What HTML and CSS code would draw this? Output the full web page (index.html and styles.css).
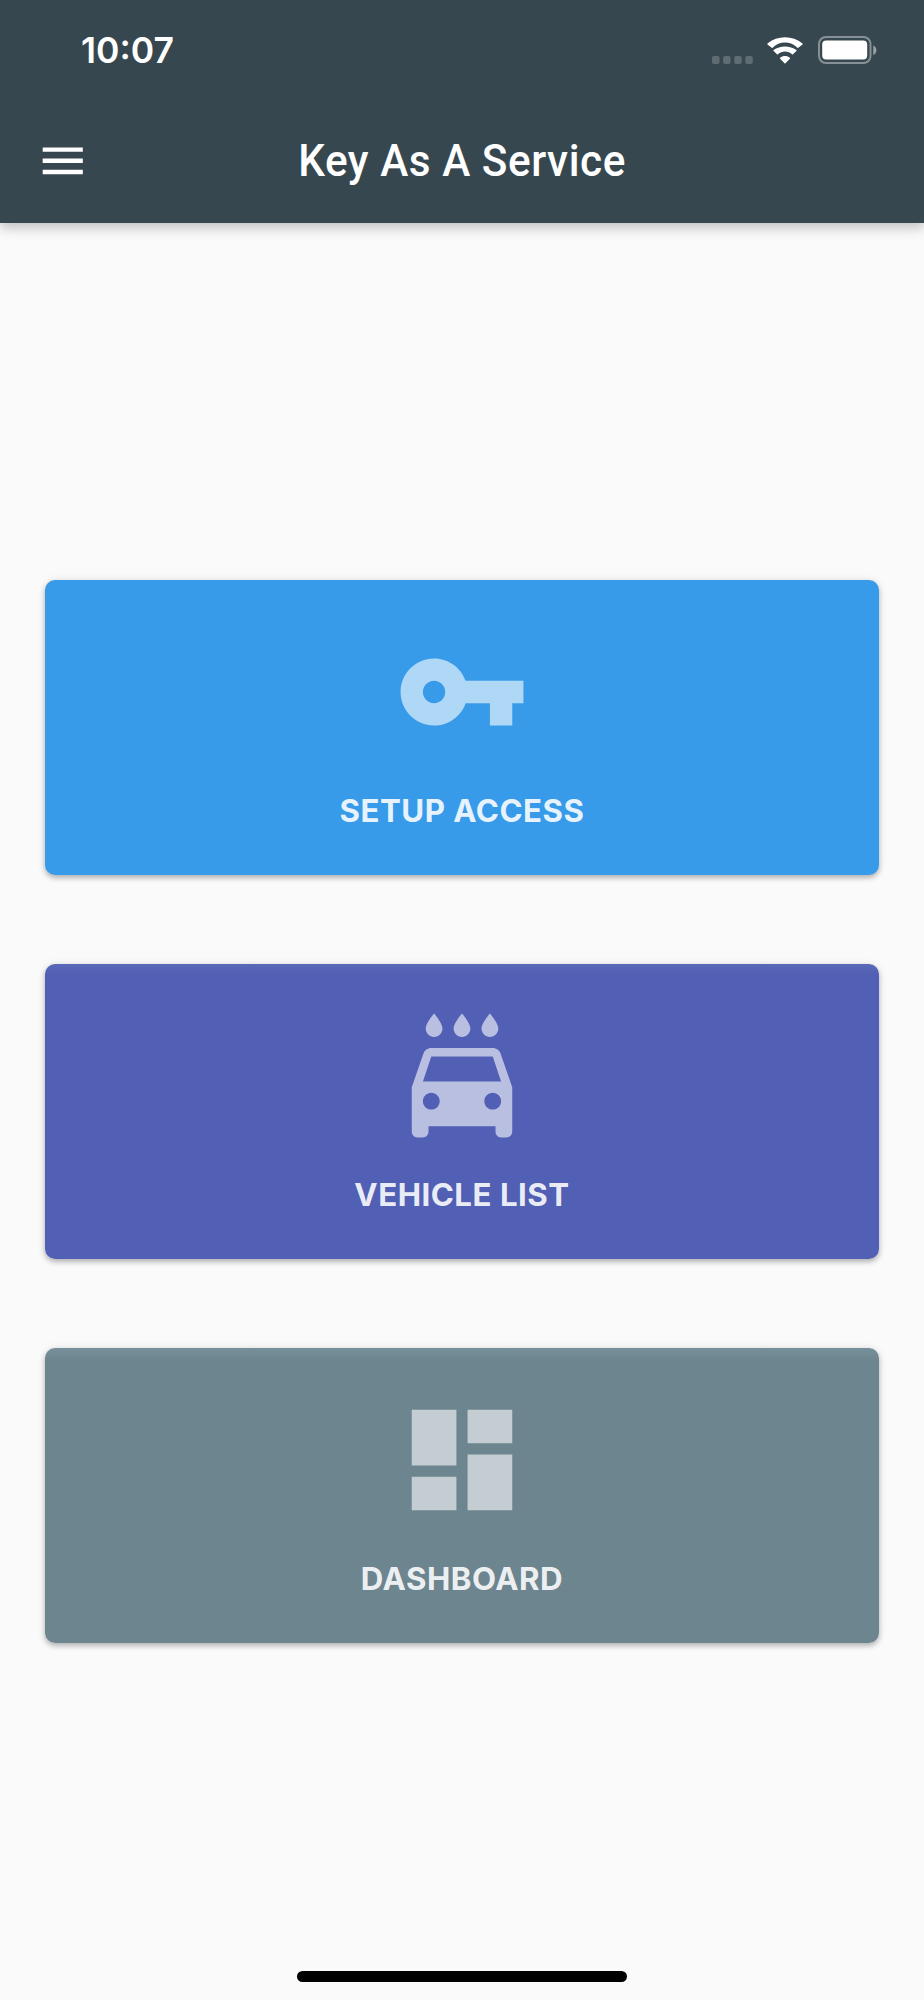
FILE: index.html
```
<!DOCTYPE html>
<html lang="en">
<head>
    <meta charset="UTF-8">
    <meta name="viewport" content="width=device-width, initial-scale=1.0">
    <title>Key As A Service</title>
    <link rel="stylesheet" href="styles.css">
</head>
<body>
    <header class="app-bar">
        <div class="status-bar">
            <span class="time">10:07</span>
            <div class="status-icons">
                <svg class="signal" viewBox="0 0 42 8">
                    <rect x="0" y="0" width="7.5" height="8" rx="2"/>
                    <rect x="11.1" y="0" width="7.5" height="8" rx="2"/>
                    <rect x="22.2" y="0" width="7.5" height="8" rx="2"/>
                    <rect x="33.3" y="0" width="7.5" height="8" rx="2"/>
                </svg>
                <svg class="wifi" viewBox="0 0 36 27">
                    <path d="M18 5.6c4.7 0 9.1 1.9 12.4 5.1.3.3.7.3.9 0l4.200-3.100c.3-.3.3-.7 0-1C25.700-1.900 10.300-1.900.5 6.600c-.3.300-.3.700 0 1l4.200 3.100c.3.3.7.3.9 0C8.900 7.500 13.300 5.600 18 5.600z"/>
                    <path d="M18 14.600c2.600 0 5.100 1 7 2.700.3.300.7.300 1 0l3.400-3.300c.3-.3.3-.7 0-1-6.400-4.700-16.400-4.700-22.800 0-.3.300-.3.700 0 1l3.400 3.300c.3.300.7.300 1 0 1.900-1.700 4.400-2.700 7-2.700z"/>
                    <path d="M22.900 20.700c.3.300.3.700 0 1l-4.400 4.500c-.3.300-.7.300-1 0l-4.400-4.500c-.3-.3-.3-.7 0-1 2.900-2.400 6.900-2.400 9.800 0z"/>
                </svg>
                <svg class="battery" viewBox="0 0 59 28">
                    <rect class="outline" x="1" y="1" width="51.500" height="26" rx="7"/>
                    <rect x="4.200" y="4.500" width="45" height="19" rx="4"/>
                    <path class="cap" d="M55.300 9.500c4.100 1.800 4.100 7.700 0 9.500z"/>
                </svg>
            </div>
        </div>
        <div class="toolbar">
            <svg class="menu" viewBox="0 0 24 24"><path d="M3 18h18v-2H3v2zm0-5h18v-2H3v2zm0-7v2h18V6H3z"/></svg>
            <h1>Key As A Service</h1>
        </div>
    </header>

    <main>
        <div class="card setup">
            <svg class="icon" viewBox="0 0 24 24"><path d="M12.650 10C11.830 7.670 9.610 6 7 6c-3.310 0-6 2.690-6 6s2.690 6 6 6c2.610 0 4.830-1.670 5.650-4H17v4h4v-4h2v-4H12.650zM7 14c-1.100 0-2-.9-2-2s.9-2 2-2 2 .9 2 2-.9 2-2 2z"/></svg>
            <span class="label">SETUP ACCESS</span>
        </div>
        <div class="card vehicles">
            <svg class="icon" viewBox="0 0 24 24"><path d="M17 5c.83 0 1.500-.67 1.500-1.500 0-1-1.500-2.700-1.500-2.700s-1.500 1.700-1.500 2.700c0 .83.67 1.500 1.500 1.500zm-5 0c.83 0 1.500-.67 1.500-1.500 0-1-1.500-2.700-1.500-2.700s-1.500 1.700-1.500 2.700c0 .83.67 1.500 1.500 1.500zM7 5c.83 0 1.500-.67 1.500-1.500C8.500 2.500 7 .8 7 .8S5.500 2.500 5.500 3.500C5.500 4.330 6.170 5 7 5zm11.920 3.010C18.720 7.420 18.160 7 17.500 7h-11c-.66 0-1.210.42-1.420 1.010L3 14v8c0 .55.45 1 1 1h1c.55 0 1-.45 1-1v-1h12v1c0 .55.45 1 1 1h1c.55 0 1-.45 1-1v-8l-2.080-5.990zM6.500 18c-.83 0-1.500-.67-1.500-1.500S5.670 15 6.500 15s1.500.67 1.500 1.500S7.330 18 6.500 18zm11 0c-.83 0-1.500-.67-1.500-1.500s.67-1.500 1.500-1.500 1.500.67 1.500 1.500-.67 1.500-1.500 1.500zM5 13l1.500-4.500h11L19 13H5z"/></svg>
            <span class="label">VEHICLE LIST</span>
        </div>
        <div class="card dashboard">
            <svg class="icon" viewBox="0 0 24 24"><path d="M3 13h8V3H3v10zm0 8h8v-6H3v6zm10 0h8V11h-8v10zm0-18v6h8V3h-8z"/></svg>
            <span class="label">DASHBOARD</span>
        </div>
    </main>

    <div class="home-indicator"></div>
</body>
</html>
```
FILE: styles.css
```
* {
    box-sizing: border-box;
}
body {
    margin: 0;
    height: 2000px;
    display: flex;
    flex-direction: column;
    background: #fafafa;
    font-family: Inter, "Liberation Sans", sans-serif;
    overflow: hidden;
}
svg {
    display: block;
    fill: #fff;
}
.app-bar {
    height: 223px;
    background: #37474f;
    box-shadow: 0 4px 9px rgba(0, 0, 0, 0.14), 0 9px 11px rgba(0, 0, 0, 0.06), 0 2px 22px rgba(0, 0, 0, 0.04);
    color: #fff;
}
.status-bar {
    height: 98px;
    padding: 0 47px 0 81px;
    display: flex;
    justify-content: space-between;
}
.time {
    margin-top: 29px;
    font-size: 35.5px;
    line-height: 44px;
    font-weight: 600;
}
.status-icons {
    display: flex;
    align-items: flex-end;
    height: 64px;
}
.signal {
    width: 42px;
    height: 8px;
    margin: 0 13px 0 0;
    opacity: 0.2;
}
.wifi {
    width: 36px;
    height: 27px;
    margin-right: 15px;
}
.battery {
    width: 59px;
    height: 28px;
}
.outline {
    fill: none;
    stroke: #fff;
    stroke-width: 2;
    opacity: 0.4;
}
.cap {
    opacity: 0.5;
}
.toolbar {
    height: 125px;
    padding: 0 36px;
    display: grid;
    grid-template-columns: 54px 1fr 54px;
    align-items: center;
}
.menu {
    width: 53.5px;
    height: 53.5px;
}
h1 {
    margin: 0;
    font-family: Roboto, sans-serif;
    font-size: 44.6px;
    font-weight: 500;
    letter-spacing: 0.6px;
    text-align: center;
    white-space: nowrap;
    transform: scaleX(0.948);
}
main {
    flex: 1;
    display: flex;
    flex-direction: column;
    gap: 89px;
    padding: 357px 45px 0;
}
.card {
    height: 295px;
    padding-top: 45px;
    display: flex;
    flex-direction: column;
    align-items: center;
    border-radius: 10px;
    box-shadow: 0 3px 5px rgba(0, 0, 0, 0.22), 0 1px 8px rgba(0, 0, 0, 0.12);
}
.setup {
    background: #389bea;
}
.vehicles {
    background: linear-gradient(#5a68b9, #515fb4 12px);
}
.dashboard {
    background: linear-gradient(#76909b, #6d858f 12px);
}
.icon {
    width: 134px;
    height: 134px;
    opacity: 0.6;
}
.label {
    margin-top: 33px;
    font-size: 31.25px;
    line-height: 38px;
    font-weight: 700;
    letter-spacing: 0.5px;
    color: rgba(255, 255, 255, 0.9);
}
.home-indicator {
    width: 330px;
    height: 11px;
    margin: 0 auto 18px;
    border-radius: 6px;
    background: #000;
}
```
